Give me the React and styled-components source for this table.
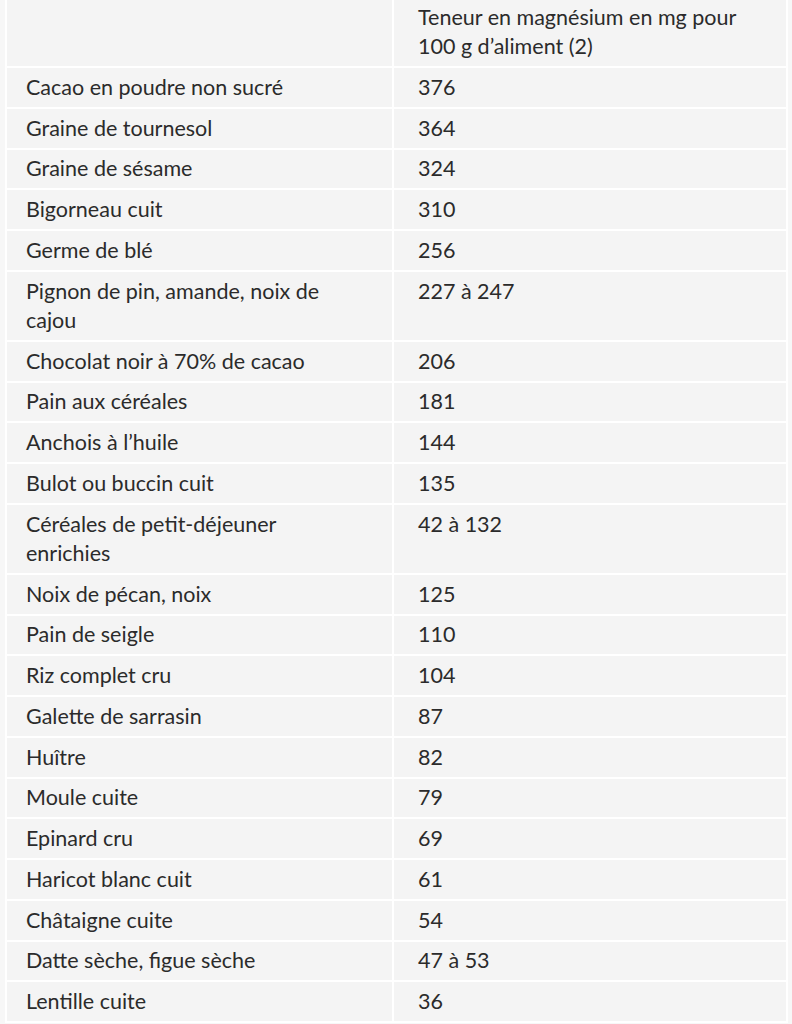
import styled, { createGlobalStyle } from "styled-components";

const rows = [
	["Cacao en poudre non sucré", "376"],
	["Graine de tournesol", "364"],
	["Graine de sésame", "324"],
	["Bigorneau cuit", "310"],
	["Germe de blé", "256"],
	["Pignon de pin, amande, noix de cajou", "227 à 247"],
	["Chocolat noir à 70% de cacao", "206"],
	["Pain aux céréales", "181"],
	["Anchois à l’huile", "144"],
	["Bulot ou buccin cuit", "135"],
	["Céréales de petit-déjeuner enrichies", "42 à 132"],
	["Noix de pécan, noix", "125"],
	["Pain de seigle", "110"],
	["Riz complet cru", "104"],
	["Galette de sarrasin", "87"],
	["Huître", "82"],
	["Moule cuite", "79"],
	["Epinard cru", "69"],
	["Haricot blanc cuit", "61"],
	["Châtaigne cuite", "54"],
	["Datte sèche, figue sèche", "47 à 53"],
	["Lentille cuite", "36"],
];

const GlobalStyle = createGlobalStyle`
	html, body {
		margin: 0;
		padding: 0;
		background: #f7f7f7;
	}
	body {
		font-family: "Lato", "Liberation Sans", sans-serif;
		color: #2b2b2b;
		overflow: hidden;
	}
`;

export default function App() {
	return (
		<>
			<GlobalStyle />
			<Wrap>
				<Table>
					<colgroup>
						<col style={{ width: 385 }} />
						<col style={{ width: 392 }} />
					</colgroup>
					<thead>
						<tr>
							<HeadCell></HeadCell>
							<HeadCell $right>
								Teneur en magnésium en mg pour 100 g d’aliment (2)
							</HeadCell>
						</tr>
					</thead>
					<tbody>
						{rows.map(([food, value]) => (
							<tr key={food}>
								<Cell>{food}</Cell>
								<Cell $right>{value}</Cell>
							</tr>
						))}
					</tbody>
				</Table>
			</Wrap>
		</>
	);
}

const Wrap = styled.div`
	padding: 0 4px 0 5px;
	margin-top: -4px;
`;

const Table = styled.table`
	width: 783px;
	table-layout: fixed;
	border-collapse: separate;
	border-spacing: 2px;
	background: #ffffff;
`;

const Cell = styled.td`
	background: #f4f4f4;
	font-size: 21.5px;
	line-height: 29.25px;
	padding: 4.75px ${(p) => (p.$right ? "40px 4.75px 24px" : "50px 4.75px 19px")};
	vertical-align: top;
	text-align: left;
	font-weight: 400;
	padding-top: 4.75px;
	padding-bottom: 4.75px;
`;

const HeadCell = styled(Cell).attrs({ as: "th" })`
	font-weight: 400;
`;
